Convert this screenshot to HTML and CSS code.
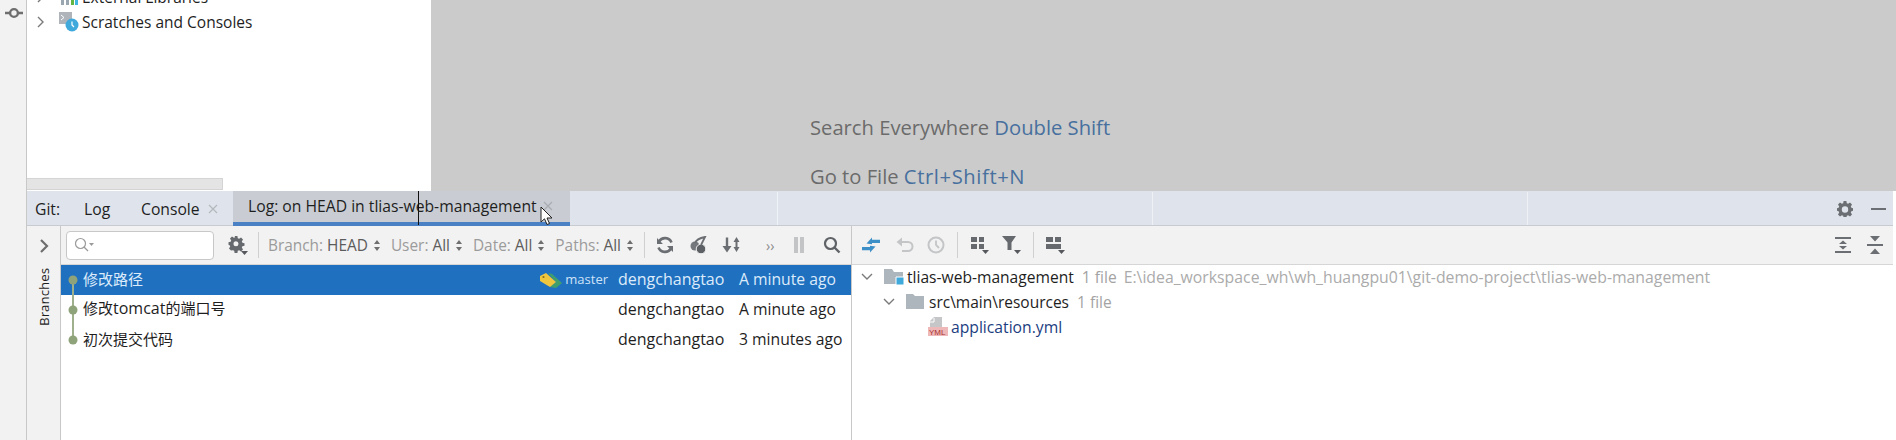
FILE: index.html
```html
<!DOCTYPE html>
<html lang="en">
<head>
<meta charset="utf-8">
<title>Git log</title>
<link rel="stylesheet" href="styles.css">
</head>
<body>
<div class="ide">
  <aside class="strip">
    <svg class="commit-ico" width="18" height="12" viewBox="0 0 18 12"><path d="M0 6h5M13 6h5" stroke="#6e6e6e" stroke-width="2.600"/><circle cx="9" cy="6" r="3.900" fill="none" stroke="#6e6e6e" stroke-width="2.400"/></svg>
  </aside>
  <div class="work">
    <div class="top">
      <section class="project">
        <div class="tree">
          <div class="tree-row">
            <svg class="chev" width="10" height="14" viewBox="0 0 10 14"><path d="M2 2l5 5-5 5" fill="none" stroke="#7a7a7a" stroke-width="1.400"/></svg>
            <svg class="node" width="20" height="20" viewBox="0 0 20 20"><path d="M2 6h3v12H2zM7 6h3v12H7z" fill="#9aa7b0"/><path d="M12 6h3v12h-3z" fill="#62b543"/><path d="M16 6h3v12h-3z" fill="#40b6e0"/></svg>
            <span>External Libraries</span>
          </div>
          <div class="tree-row">
            <svg class="chev" width="10" height="14" viewBox="0 0 10 14"><path d="M2 2l5 5-5 5" fill="none" stroke="#7a7a7a" stroke-width="1.400"/></svg>
            <svg class="node" width="20" height="20" viewBox="0 0 20 20"><path d="M0 0h13v12H0z" fill="#aeb4ba"/><path d="M2 3l3 2.500L2 8" fill="none" stroke="#fff" stroke-width="1"/><circle cx="13" cy="13" r="6.500" fill="#40a9dc"/><path d="M13 9.500V13l2 2" fill="none" stroke="#fff" stroke-width="1.200"/></svg>
            <span>Scratches and Consoles</span>
          </div>
        </div>
        <div class="hscroll"></div>
      </section>
      <section class="hints">
        <p class="hint">Search Everywhere <b class="key">Double Shift</b></p>
        <p class="hint">Go to File <b class="key key-combo">Ctrl+Shift+N</b></p>
      </section>
    </div>
    <section class="git">
      <div class="tabs">
        <span class="tab-label">Git:</span>
        <span class="tab tab-log">Log</span>
        <span class="tab tab-console">Console<svg class="close" width="10" height="10" viewBox="0 0 10 10"><path d="M1 1l8 8M9 1l-8 8" stroke="#b4b8bd" stroke-width="1.200"/></svg></span>
        <span class="tab tab-active">Log: on HEAD in tlias-web-management<svg class="close" width="10" height="10" viewBox="0 0 10 10"><path d="M1 1l8 8M9 1l-8 8" stroke="#a9adb2" stroke-width="1.200"/></svg></span>
        <div class="tab-fill">
          <i class="tab-cell tab-cell-first"></i><i class="tab-cell"></i><i class="tab-cell"></i>
        </div>
        <svg class="tab-gear" width="16" height="16" viewBox="0 0 16 16"><path fill="#6b6e72" fill-rule="evenodd" d="M6.600 0h2.800l.4 2.200 1.300.6L13 1.600l2 2-1.200 1.900.6 1.300L16 7.200v2.600l-1.600.4-.6 1.300L15 13.400l-2 2-1.900-1.200-1.300.6-.4 2.200H6.600l-.4-2.200-1.300-.6L3 15.400l-2-2 1.200-1.900-.6-1.300L0 9.800V7.200l1.600-.4.6-1.300L1 3.600l2-2 1.900 1.200 1.300-.6zM8 5.300a3.200 3.200 0 1 0 0 6.400 3.200 3.200 0 0 0 0-6.400z"/></svg>
        <span class="tab-min"></span>
      </div>
      <div class="git-body">
        <aside class="branches">
          <svg width="10" height="16" viewBox="0 0 10 16"><path d="M2 2l6 6-6 6" fill="none" stroke="#6e6e6e" stroke-width="2.200"/></svg>
          <span class="branches-label">Branches</span>
        </aside>
        <section class="log">
          <div class="toolbar">
            <div class="search">
              <svg width="20" height="16" viewBox="0 0 20 16"><circle cx="6.500" cy="6.500" r="5" fill="none" stroke="#9a9a9a" stroke-width="1.200"/><path d="M10 10l4 4" stroke="#9a9a9a" stroke-width="1.200"/><path d="M15 6h5l-2.500 3z" fill="#9a9a9a"/></svg>
            </div>
            <svg class="t-gear" width="20" height="20" viewBox="0 0 20 20"><path fill="#66696d" fill-rule="evenodd" d="M6.600 1h2.800l.4 2.200 1.300.6L13 2.600l2 2-1.200 1.900.6 1.300 2.100.4v2.600l-2.100.4-.6 1.300 1.200 1.900-2 2-1.900-1.200-1.300.6-.4 2.200H6.600l-.4-2.200-1.300-.6L3 15.400l-2-2 1.200-1.900-.6-1.300L.5 9.800V7.200l2.100-.4.6-1.300L2 3.600l2-2 1.900 1.200 1.300-.6zM8 6.300a2.500 2.500 0 1 0 0 5 2.500 2.500 0 0 0 0-5z"/><path d="M13 16h7l-3.500 4z" fill="#55585c"/></svg>
            <i class="sep sep-a"></i>
            <span class="filter f-branch">Branch: <b>HEAD</b></span><span class="updown"></span>
            <span class="filter f-next">User: <b>All</b></span><span class="updown"></span>
            <span class="filter f-next">Date: <b>All</b></span><span class="updown"></span>
            <span class="filter f-next">Paths: <b>All</b></span><span class="updown"></span>
            <i class="sep sep-b"></i>
            <svg class="ti ti-sync" width="18" height="18" viewBox="0 0 18 18"><path d="M15.500 6.500A7 7 0 0 0 3 5.500M2.500 11.500A7 7 0 0 0 15 12.500" fill="none" stroke="#6b6e72" stroke-width="2.600"/><path d="M1 2v6h6zM17 16v-6h-6z" fill="#6b6e72"/></svg>
            <svg class="ti ti-cherry" width="18" height="18" viewBox="0 0 18 18"><circle cx="5" cy="10" r="4.500" fill="#75787c"/><circle cx="11" cy="13" r="4.800" fill="#5d6064" stroke="#f2f2f2"/><path d="M5 7c1-3 5-5 10-6L11 9" fill="none" stroke="#6b6e72" stroke-width="1.800"/></svg>
            <svg class="ti ti-sort" width="18" height="18" viewBox="0 0 18 18"><path d="M5 1.500v12" stroke="#6b6e72" stroke-width="2.400"/><path d="M.5 10h9L5 16.500zM11.500 6L14.500 1l3 5zM11.500 11h6l-3 5z" fill="#6b6e72"/><path d="M14.500 6v5" stroke="#6b6e72" stroke-width="2"/></svg>
            <span class="more">››</span>
            <svg class="ti ti-pause" width="14" height="18" viewBox="0 0 14 18"><path d="M2 1h4v16H2zM8 1h4v16H8z" fill="#c2c4c6"/></svg>
            <svg class="ti ti-find" width="18" height="18" viewBox="0 0 18 18"><circle cx="7.500" cy="7.500" r="5.500" fill="none" stroke="#5f6266" stroke-width="2.200"/><path d="M11.500 11.500l5 5" stroke="#5f6266" stroke-width="2.400"/></svg>
          </div>
          <div class="commits">
            <div class="commit selected">
              <svg class="graph" width="22" height="30" viewBox="0 0 22 30"><path d="M12 15v15" stroke="#9eb08c" stroke-width="2"/><circle cx="12" cy="15" r="4.500" fill="#8fa37a"/></svg>
              <span class="subject">修改路径</span>
              <svg class="tag" width="24" height="18" viewBox="0 0 24 18"><path d="M10 2l4 1 10 9-6 5-6-1 6-5z" fill="#3f9f6c"/><path d="M2 5l6-3 10 9-6 5-10-6z" fill="#f0c63f"/><circle cx="5.500" cy="6" r="1.100" fill="#8a6d1c"/></svg>
              <span class="branch">master</span>
              <span class="author">dengchangtao</span>
              <span class="when">A minute ago</span>
            </div>
            <div class="commit">
              <svg class="graph" width="22" height="30" viewBox="0 0 22 30"><path d="M12 0v30" stroke="#9eb08c" stroke-width="2"/><circle cx="12" cy="15" r="4.500" fill="#8fa37a"/></svg>
              <span class="subject">修改<span class="latin">tomcat</span>的端口号</span>
              <span class="author">dengchangtao</span>
              <span class="when">A minute ago</span>
            </div>
            <div class="commit">
              <svg class="graph" width="22" height="30" viewBox="0 0 22 30"><path d="M12 0v15" stroke="#9eb08c" stroke-width="2"/><circle cx="12" cy="15" r="4.500" fill="#8fa37a"/></svg>
              <span class="subject">初次提交代码</span>
              <span class="author">dengchangtao</span>
              <span class="when">3 minutes ago</span>
            </div>
          </div>
        </section>
        <section class="changes">
          <div class="toolbar toolbar-changes">
            <svg class="ci ci-first" width="20" height="20" viewBox="0 0 20 20"><path d="M11 2.500L5.500 8.500l5.500.7zM11 4.800h8v3.200h-8zM9 17.500l5.500-6-5.500-.7zM9 15.200H1V12h8z" fill="#3d8fc7"/></svg>
            <svg class="ci ci-undo" width="18" height="18" viewBox="0 0 18 18"><path d="M4 6h8a4.500 4.500 0 0 1 0 9H6" fill="none" stroke="#c3c5c7" stroke-width="2"/><path d="M6 1.500v9L0.500 6z" fill="#c3c5c7"/></svg>
            <svg class="ci ci-clock" width="18" height="18" viewBox="0 0 18 18"><circle cx="9" cy="9" r="7.500" fill="none" stroke="#c3c5c7" stroke-width="2"/><path d="M9 4.500V9l3 3" fill="none" stroke="#c3c5c7" stroke-width="1.800"/></svg>
            <i class="sep sep-c"></i>
            <svg class="ci ci-group" width="20" height="20" viewBox="0 0 20 20"><path d="M1 2h6v5H1zM9 2h5v5H9zM1 9h6v5H1zM9 9h5v5H9z" fill="#66696d"/><path d="M12 15h7l-3.500 4z" fill="#55585c"/></svg>
            <svg class="ci ci-filter" width="20" height="20" viewBox="0 0 20 20"><path d="M0 1h14L9.500 7.500V15H5.500V7.500z" fill="#66696d"/><path d="M12 15h7l-3.500 4z" fill="#55585c"/></svg>
            <i class="sep sep-d"></i>
            <svg class="ci ci-layout" width="22" height="20" viewBox="0 0 22 20"><path d="M1 2h7v5H1zM10 2h6v5h-6zM1 9h15v5H1z" fill="#66696d"/><path d="M13 15h7l-3.500 4z" fill="#55585c"/></svg>
            <span class="spacer"></span>
            <svg class="ci ci-expand" width="16" height="18" viewBox="0 0 16 18"><path d="M0 1h16v2H0zM0 15h16v2H0z" fill="#6b6e72"/><path d="M8 4.500L12 8H4zM8 13.500L4 10h8z" fill="#6b6e72"/></svg>
            <svg class="ci ci-collapse" width="16" height="18" viewBox="0 0 16 18"><path d="M0 8h16v2H0z" fill="#6b6e72"/><path d="M3 0h10L8 5.500zM3 18h10L8 12.500z" fill="#6b6e72"/></svg>
          </div>
          <div class="files">
            <div class="file file-root">
              <svg class="down" width="12" height="10" viewBox="0 0 12 10"><path d="M1 2l5 5 5-5" fill="none" stroke="#7a7a7a" stroke-width="1.400"/></svg>
              <svg class="folder" width="20" height="18" viewBox="0 0 20 18"><path d="M0 1h8l2 3h9v12H0z" fill="#aeb6bd"/><path d="M12 9h8v8h-8z" fill="#40a9dc" stroke="#fff"/></svg>
              <span class="fname">tlias-web-management</span>
              <span class="count">1 file</span>
              <span class="path">E:\idea_workspace_wh\wh_huangpu01\git-demo-project\tlias-web-management</span>
            </div>
            <div class="file file-dir">
              <svg class="down" width="12" height="10" viewBox="0 0 12 10"><path d="M1 2l5 5 5-5" fill="none" stroke="#7a7a7a" stroke-width="1.400"/></svg>
              <svg class="folder" width="18" height="15" viewBox="0 0 18 15"><path d="M0 0h7l2 2h9v13H0z" fill="#aeb6bd"/></svg>
              <span class="fname">src\main\resources</span>
              <span class="count">1 file</span>
            </div>
            <div class="file file-leaf">
              <svg class="yml" width="20" height="20" viewBox="0 0 20 20"><path d="M6 0h8v10H2V4z" fill="#c4c6c8"/><path d="M6 1v4H2" fill="none" stroke="#fff"/><path d="M0 10h20v9H0z" fill="#efb8b8"/><text x="1" y="18" class="yml-text">YML</text></svg>
              <span class="fname link">application.yml</span>
            </div>
          </div>
        </section>
      </div>
      <i class="caret"></i>
      <svg class="pointer" width="13" height="20" viewBox="0 0 13 20"><path d="M1 1v15l3.500-3.200L7 18.500l2.500-1-2.500-5.500h5z" fill="#fff" stroke="#222" stroke-width="1"/></svg>
    </section>
  </div>
</div>
</body>
</html>
```

FILE: styles.css
```css
* { box-sizing: border-box; }
html, body { margin: 0; height: 100%; overflow: hidden; }
body { font-family: "Open Sans", "Noto Sans CJK SC", sans-serif; font-size: 15.7px; color: #1e1e1e; background: #fff; }
svg { display: block; flex: none; }

.ide { display: flex; width: 1896px; height: 440px; }
.strip { width: 27px; flex: none; background: #f2f2f2; border-right: 1px solid #c8c8c8; padding: 7px 0 0 5px; }
.work { flex: 1; min-width: 0; display: flex; flex-direction: column; }

.top { height: 191px; display: flex; flex: none; }
.project { width: 404px; flex: none; background: #fff; display: flex; flex-direction: column; overflow: hidden; }
.tree { margin-top: -16px; padding-left: 9px; font-size: 15.5px; }
.tree-row { display: flex; align-items: center; height: 25px; white-space: nowrap; }
.node { margin: 0 3px 0 13px; }
.hscroll { margin-top: auto; margin-bottom: 1px; width: 196px; height: 12px; background: #e4e4e4; border: 1px solid #d4d4d4; border-left: 0; }

.hints { flex: 1; background: #cbcbcb; padding: 115px 0 0 379px; font-size: 20.2px; color: #6b6b6b; }
.hint { margin: 0 0 25px; line-height: 24px; white-space: nowrap; }
.key { font-weight: 400; color: #47709e; }
.key-combo { letter-spacing: 0.6px; }

.git { flex: 1; display: flex; flex-direction: column; position: relative; min-height: 0; border-right: 3px solid #fff; }
.tabs { height: 35px; flex: none; display: flex; align-items: center; background: #dfe4ec; border-bottom: 1px solid #c8cbd0; padding-top: 1px; }
.tab-label { width: 57px; flex: none; padding-left: 8px; }
.tab { display: flex; align-items: center; height: 100%; flex: none; white-space: nowrap; }
.tab-log { width: 57px; }
.tab-console { width: 92px; gap: 8px; }
.tab-active { width: 337px; margin-top: -1px; height: 35px; padding-left: 15px; gap: 6px; background: #c9cdd3; border-bottom: 4px solid #4a80c4; }
.tab-fill { display: flex; flex: none; width: 1267px; height: 100%; }
.tab-cell { flex: none; width: 375px; height: 100%; border-right: 1px solid #eef1f5; }
.tab-cell-first { width: 208px; }
.tab-min { width: 15px; height: 2px; background: #6b6e72; margin-left: 18px; flex: none; }

.git-body { flex: 1; display: flex; min-height: 0; }
.branches { width: 34px; flex: none; background: #f2f2f2; border-right: 1px solid #c8c8c8; display: flex; flex-direction: column; align-items: center; padding: 12px 0 0 1px; }
.branches-label { writing-mode: vertical-rl; transform: rotate(180deg); font-size: 13.3px; margin-top: 14px; line-height: 16px; }

.log { width: 791px; flex: none; border-right: 1px solid #c8c8c8; display: flex; flex-direction: column; }
.toolbar { height: 39px; flex: none; display: flex; align-items: center; background: #f2f2f2; border-bottom: 1px solid #d6d6d6; }
.search { width: 148px; height: 29px; margin-left: 5px; background: #fff; border: 1px solid #c8c8c8; border-radius: 4px; display: flex; align-items: center; padding-left: 7px; }
.t-gear { margin-left: 14px; }
.sep { width: 1px; height: 26px; background: #d0d0d0; flex: none; }
.sep-a { margin-left: 10px; }
.sep-b { margin-left: 10px; }
.filter { color: #9b9b9b; white-space: nowrap; font-size: 15.4px; }
.filter b { font-weight: 400; color: #5c5c5c; }
.f-branch { margin-left: 9px; }
.f-next { margin-left: 10px; }
.updown { position: relative; width: 7px; height: 11px; margin-left: 6px; flex: none; }
.updown::before, .updown::after { content: ""; position: absolute; left: 0; border-left: 3.5px solid transparent; border-right: 3.5px solid transparent; }
.updown::before { top: 0; border-bottom: 4px solid #6e6e6e; }
.updown::after { bottom: 0; border-top: 4px solid #6e6e6e; }
.ti-sync { margin-left: 11px; }
.ti-cherry { margin-left: 16px; }
.ti-sort { margin-left: 14px; }
.more { margin-left: 26px; color: #8a8a8a; font-size: 14px; width: 14px; flex: none; }
.ti-pause { margin-left: 12px; }
.ti-find { margin-left: 17px; }

.commits { flex: 1; background: #fff; }
.commit { height: 30px; display: flex; align-items: center; padding-right: 10px; white-space: nowrap; }
.commit.selected { background: #2070c0; color: #dcebfa; }
.subject { flex: 1; font-size: 15px; padding-bottom: 4px; }
.latin { font-size: 16px; }
.tag { margin-right: 3px; }
.branch { font-size: 13px; margin-right: 10px; color: #cfe3f7; padding-bottom: 2px; }
.author { width: 121px; flex: none; font-size: 16px; padding-bottom: 2px; }
.when { width: 102px; flex: none; padding-bottom: 2px; }

.changes { flex: 1; min-width: 0; display: flex; flex-direction: column; }
.toolbar-changes { padding-right: 10px; }
.ci-first { margin-left: 9px; }
.ci-undo { margin-left: 15px; }
.ci-clock { margin-left: 13px; }
.sep-c { margin-left: 12px; }
.ci-group { margin-left: 12px; }
.ci-filter { margin-left: 12px; }
.sep-d { margin-left: 11px; }
.ci-layout { margin-left: 11px; }
.spacer { flex: 1; }
.ci-collapse { margin-left: 16px; }

.files { flex: 1; background: #fff; }
.file { height: 25px; display: flex; align-items: center; white-space: nowrap; }
.file-root { height: 24px; padding-left: 9px; font-size: 15.6px; }
.file-dir { padding-left: 31px; font-size: 15.5px; }
.file-leaf { padding-left: 76px; }
.folder { margin-left: 11px; }
.fname { margin-left: 3px; }
.file-dir .fname { margin-left: 5px; }
.count { color: #a3a3a3; margin-left: 8px; }
.path { color: #ababab; margin-left: 7px; font-size: 15.8px; }
.link { color: #1b3d80; }
.yml-text { font-family: "Liberation Sans", sans-serif; font-size: 8px; fill: #a83232; }

.caret { position: absolute; left: 391px; top: 0; width: 1px; height: 34px; background: #111; }
.pointer { position: absolute; left: 513px; top: 15px; }
```
